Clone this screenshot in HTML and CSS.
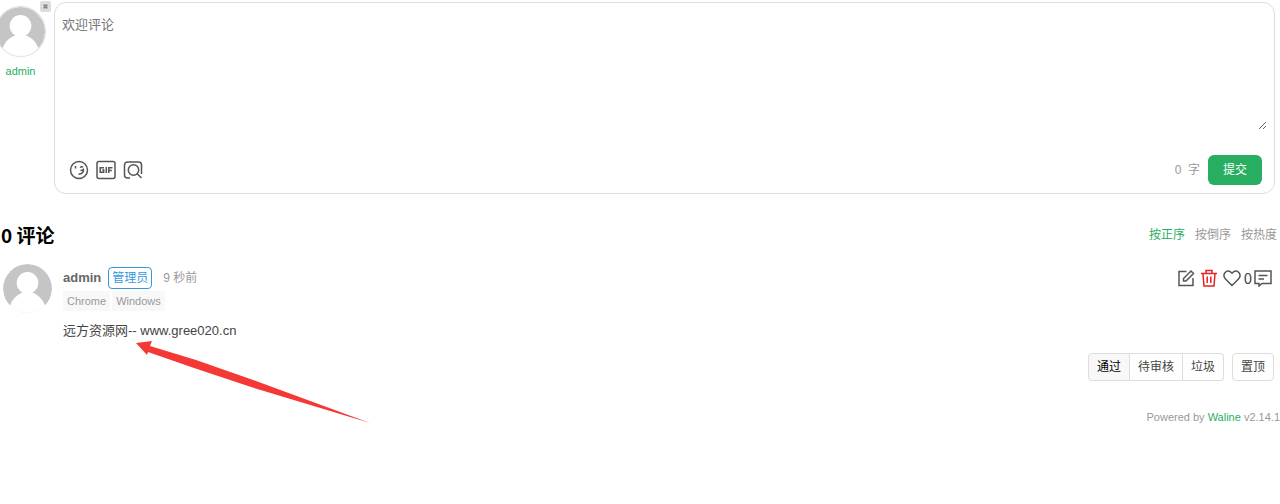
FILE: index.html
```
<!DOCTYPE html>
<html lang="zh-CN">
  <head>
    <meta charset="utf-8" />
    <meta name="viewport" content="width=device-width, initial-scale=1" />
    <title>评论</title>
    <link rel="stylesheet" href="styles.css">
  </head>
  <body>
    <div class="comments">
      <form class="editor">
        <div class="login-info">
          <div class="login-avatar">
            <svg class="avatar avatar-outline" viewBox="0 0 52 52">
              <circle cx="26" cy="26" r="26" fill="#c5c5c5" />
              <circle cx="26" cy="20" r="11.500" fill="#fff" />
              <path d="M0 52L8 42C10 36 15 32 21 30H31C37 32 42 36 44 42L52 52Z" fill="#fff" />
            </svg>
            <button type="button" class="logout" aria-label="退出">
              <svg viewBox="0 0 12 12"><path d="M4 4l4 4M8 4l-4 4" stroke="#888" stroke-width="2" /></svg>
            </button>
          </div>
          <a href="#" class="login-nick">admin</a>
        </div>

        <div class="panel">
          <textarea class="editor-text" placeholder="欢迎评论" aria-label="评论内容"></textarea>
          <div class="panel-footer">
            <div class="tools">
              <button type="button" class="icon-button" aria-label="表情">
                <svg viewBox="0 0 20 20">
                  <circle cx="10" cy="10" r="8.500" />
                  <path d="M6.500 6v2.400M11 7.500c1-.8 2-.9 3.200-.3M14.300 8.500c.9 3-1 5.700-4.800 5.700M11.500 10.500l2.800-.5" />
                </svg>
              </button>
              <button type="button" class="icon-button" aria-label="GIF">
                <svg viewBox="0 0 20 20">
                  <rect x="1" y="1.500" width="18" height="17" rx="2" />
                  <path d="M8 7.700H4.200v4.600h3.500V10H6.200M10.300 7v6M12.800 13V7.700H16.500M12.800 10.400h3" />
                </svg>
              </button>
              <button type="button" class="icon-button" aria-label="搜索图片">
                <svg viewBox="0 0 20 20">
                  <path d="M7 18H4.500A3 3 0 0 1 1.500 15V5A3 3 0 0 1 4.500 2H15.500A3 3 0 0 1 18.500 5V14" />
                  <circle cx="10.500" cy="10" r="5.200" />
                  <path d="M14 13.500l4.500 4.500" />
                </svg>
              </button>
            </div>
            <div class="submit-area">
              <span class="word-count">0 &nbsp;字</span>
              <button type="button" class="submit">提交</button>
            </div>
          </div>
        </div>
      </form>

      <div class="meta-head">
        <h2 class="count">0 评论</h2>
        <div class="sort">
          <button type="button" class="sort-button active">按正序</button>
          <button type="button" class="sort-button">按倒序</button>
          <button type="button" class="sort-button">按热度</button>
        </div>
      </div>

      <div class="card">
        <svg class="avatar card-avatar" viewBox="0 0 52 52">
          <circle cx="26" cy="26" r="26" fill="#c5c5c5" />
          <circle cx="26" cy="20" r="11.500" fill="#fff" />
          <path d="M0 52V50L8 43C10 37 15 33 21 30H31C37 33 42 37 44 43L52 50V52Z" fill="#fff" />
        </svg>
        <div class="card-main">
          <div class="card-head">
            <span class="nick">admin</span>
            <span class="badge">管理员</span>
            <span class="time">9 秒前</span>
            <div class="actions">
              <button type="button" class="icon-button" aria-label="编辑">
                <svg viewBox="0 0 18 18"><path d="M9.500 2.500H2v14h14V9M6.500 12V9.500l7.500-7.500 2.500 2.500L9 12z" /></svg>
              </button>
              <button type="button" class="icon-button delete" aria-label="删除">
                <svg viewBox="0 0 18 18"><path d="M1 4.500h16M6 4V1.500h6V4M3 5l1 12h10l1-12M7.200 7.500v6.500M10.800 7.500v6.500" /></svg>
              </button>
              <button type="button" class="icon-button like" aria-label="喜欢">
                <svg viewBox="0 0 18 18"><path d="M9 16.500L2.500 10C-1.500 5.500 3.500.3 7.500 2.800L9 4.300 10.500 2.800C14.500.3 19.500 5.500 15.500 10z" /></svg>
                <span>0</span>
              </button>
              <button type="button" class="icon-button" aria-label="回复">
                <svg viewBox="0 0 18 18"><path d="M1 2h16v12.500H8L5 17V14.500H1zM4.500 6.500h9M4.500 10h5.500" /></svg>
              </button>
            </div>
          </div>
          <div class="client">
            <span>Chrome</span>
            <span>Windows</span>
          </div>
          <p class="content">远方资源网-- www.gree020.cn</p>
          <svg class="arrow" viewBox="0 0 234 82">
            <path d="M0 0L16 -2L14 3L60 17L120 38L234 80L115 44L58 25L12 9L11 12Z" fill="#f43835" />
          </svg>
          <div class="admin-actions">
            <div class="status-group">
              <button type="button" class="status-button" disabled>通过</button>
              <button type="button" class="status-button">待审核</button>
              <button type="button" class="status-button">垃圾</button>
            </div>
            <button type="button" class="status-button sticky">置顶</button>
          </div>
        </div>
      </div>

      <div class="power">Powered by <a href="#">Waline</a> v2.14.1</div>
    </div>
  </body>
</html>
```
FILE: styles.css
```
* {
  margin: 0;
  padding: 0;
  box-sizing: border-box;
}

body {
  font-family: "Liberation Sans", "Noto Sans CJK SC", sans-serif;
  font-size: 12px;
  line-height: 16px;
  color: #444;
  background: #fff;
  overflow-x: hidden;
}

button {
  font-family: inherit;
  font-size: 12px;
  line-height: 16px;
  color: #444;
  background: transparent;
  border: none;
  cursor: pointer;
}

a {
  color: #27ae60;
  text-decoration: none;
}

svg {
  display: block;
}

.comments {
  padding-top: 2px;
}

.editor {
  display: flex;
  gap: 8px;
  padding-right: 5px;
}

.login-info {
  width: 51px;
  margin-left: -5px;
  padding-top: 4px;
  text-align: center;
}

.login-avatar {
  position: relative;
  margin-bottom: 6px;
}

.login-nick {
  font-size: 11px;
}

.avatar {
  width: 51px;
  height: 51px;
  border-radius: 50%;
}

.avatar-outline {
  border: 1px solid #ddd;
}

.card-avatar {
  width: 49px;
  height: 49px;
}

.logout {
  position: absolute;
  top: -5px;
  right: -5px;
  width: 11px;
  height: 11px;
  background: #ddd;
  border-radius: 2px;
}

.panel {
  flex: 1;
  padding: 7px 7px 8px;
  border: 1px solid #ddd;
  border-radius: 12px;
}

.editor-text {
  display: block;
  width: 100%;
  height: 120px;
  padding: 5px 0;
  border: none;
  outline: none;
  resize: vertical;
  font-family: inherit;
  font-size: 13px;
  line-height: 20px;
}

.editor-text::placeholder {
  color: #757575;
}

.panel-footer {
  display: flex;
  justify-content: space-between;
  align-items: center;
  padding: 25px 5px 0 7px;
}

.tools {
  display: flex;
  gap: 7px;
}

.icon-button {
  display: flex;
  align-items: center;
}

.icon-button svg {
  width: 18px;
  height: 18px;
  fill: none;
  stroke: #555;
  stroke-width: 1.5;
}

.tools .icon-button svg {
  width: 20px;
  height: 20px;
}

.submit-area {
  display: flex;
  align-items: center;
  gap: 8px;
}

.word-count {
  color: #999;
}

.submit {
  padding: 7px 15px;
  color: #fff;
  background: #27ae60;
  border-radius: 6px;
}

.meta-head {
  display: flex;
  justify-content: space-between;
  align-items: center;
  padding: 28px 3px 16px 1px;
}

.count {
  font-family: "Noto Sans CJK SC", sans-serif;
  font-size: 19px;
  line-height: 26px;
  color: #000;
}

.sort {
  display: flex;
  gap: 10px;
}

.sort-button {
  color: #999;
}

.sort-button.active {
  color: #27ae60;
}

.card {
  display: flex;
  gap: 11px;
  padding: 0 6px 0 3px;
}

.card-main {
  flex: 1;
  position: relative;
}

.card-head {
  display: flex;
  align-items: center;
  height: 27px;
}

.nick {
  margin-right: 7px;
  font-size: 13px;
  font-weight: bold;
  color: #666;
}

.badge {
  margin-right: 11px;
  padding: 2px 3px;
  color: #3498db;
  border: 1px solid #3498db;
  border-radius: 4px;
}

.time {
  color: #999;
}

.actions {
  display: flex;
  gap: 5px;
  margin-left: auto;
  margin-right: 2px;
}

.delete svg {
  stroke: #e62222;
}

.like {
  gap: 3px;
  margin-right: -3px;
  font-family: "Noto Sans CJK SC", sans-serif;
  font-size: 15px;
}

.client {
  display: flex;
  gap: 2px;
  font-size: 11px;
  color: #999;
}

.client span {
  padding: 2px 4px;
  background: #f8f8f8;
}

.content {
  padding: 10px 0 12px;
  font-size: 13px;
  line-height: 20px;
}

/* pointer drawn over the comment */
.arrow {
  position: absolute;
  top: 79px;
  left: 73px;
  width: 234px;
  height: 82px;
  overflow: visible;
  pointer-events: none;
}

.admin-actions {
  display: flex;
  justify-content: flex-end;
  gap: 8px;
}

.status-group {
  display: flex;
}

.status-button {
  padding: 5px 8px;
  border: 1px solid #ddd;
}

.status-button:disabled {
  color: #000;
  background: #f8f8f8;
}

.status-group .status-button + .status-button {
  border-left: none;
}

.status-group .status-button:first-child {
  border-radius: 4px 0 0 4px;
}

.status-group .status-button:last-child {
  border-radius: 0 4px 4px 0;
}

.sticky {
  border-radius: 4px;
}

.power {
  padding: 28px 0;
  font-size: 11px;
  text-align: right;
  color: #999;
}
```
